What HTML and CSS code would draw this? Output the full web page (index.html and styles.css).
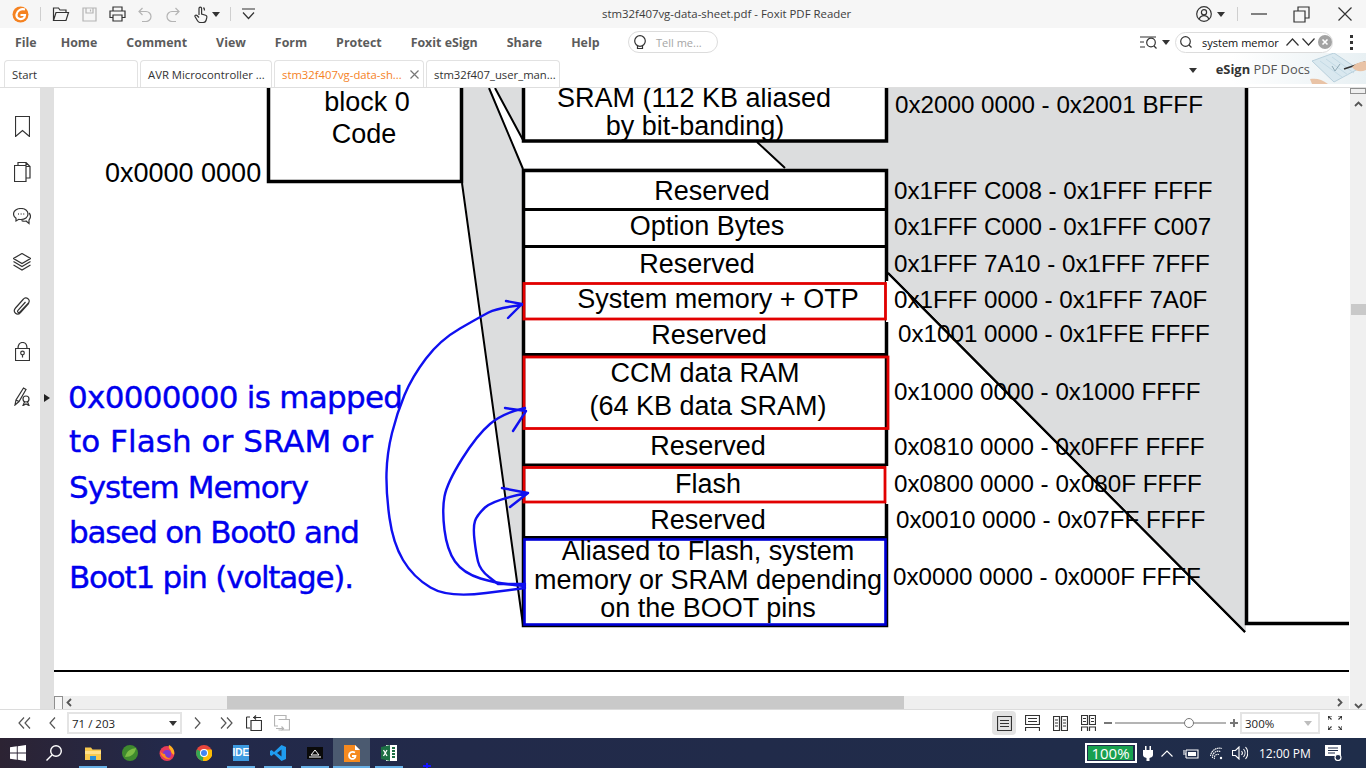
FILE: index.html
```html
<!DOCTYPE html>
<html lang="en">
<head>
<meta charset="utf-8">
<title>stm32f407vg-data-sheet.pdf - Foxit PDF Reader</title>
<link rel="stylesheet" href="styles.css">
</head>
<body>
<div class="app">
  <header class="titlebar">
    <div class="logo-cell">
      <svg width="17" height="17" viewBox="0 0 17 17"><circle cx="8.5" cy="8.5" r="8" fill="#f58220"/><path d="M13 3.5C9 2.5 5 4.5 4.5 8.5S8 14 11 12.5c1.500-.8 2-2.500 2-3.500H8.500" fill="none" stroke="#fff" stroke-width="2.200"/></svg>
    </div>
    <span class="vsep"></span>
    <div class="quick">
      <button class="tool"><svg width="18" height="16" viewBox="0 0 18 16" class="ic"><path d="M1.500 14.500V2h5l1.500 2h6v2.500M1.500 14.500h12.500l2.500-8H4z"/></svg></button>
      <button class="tool"><svg width="15" height="15" viewBox="0 0 15 15" class="ic dim"><path d="M1 1h13v13H1zM4 1v5h7V1M8.500 2.500v2"/></svg></button>
      <button class="tool"><svg width="17" height="16" viewBox="0 0 17 16" class="ic"><path d="M4 5V1h9v4M4 11.500H1V5h15v6.500h-3M4 9h9v6H4z"/></svg></button>
      <button class="tool"><svg width="14" height="15" viewBox="0 0 14 15" class="ic dim"><path d="M4.500 1L1 4.500 4.500 8M1 4.500h7a5 5 0 0 1 0 10H4"/></svg></button>
      <button class="tool"><svg width="14" height="15" viewBox="0 0 14 15" class="ic dim"><path d="M9.500 1L13 4.500 9.500 8M13 4.500H6a5 5 0 0 0 0 10h4"/></svg></button>
      <button class="tool"><svg width="14" height="17" viewBox="0 0 14 17" class="ic"><path d="M5 9V2.500a1.300 1.300 0 0 1 2.600 0V8l4 1.200c1 .3 1.400 1.200 1.200 2.200l-.6 2.600c-.3 1.300-1.400 2.500-3 2.500H6.500c-1.500 0-2.400-.8-3-1.800L1 10.500c-.4-1.200 1-2 2-1L5 11.500"/><path d="M9.500 1.500a4.500 4.500 0 0 1 1 3"/></svg></button>
      <span class="caret caret-hand"></span>
    </div>
    <span class="vsep sep-b"></span>
    <svg class="ic collapse" width="13" height="13" viewBox="0 0 13 13"><path d="M0 1h13M1 4.500l5.500 6 5.500-6"/></svg>
    <div class="doc-title">stm32f407vg-data-sheet.pdf - Foxit PDF Reader</div>
    <div class="win-controls">
      <svg class="ic" width="16" height="16" viewBox="0 0 16 16"><circle cx="8" cy="8" r="7.300"/><circle cx="8" cy="6.200" r="2.600"/><path d="M3.200 13c1-2.500 2.700-3.300 4.800-3.300s3.800.8 4.800 3.300"/></svg>
      <span class="caret caret-user"></span>
      <span class="vsep sep-w"></span>
      <svg class="ic w-min" width="16" height="2" viewBox="0 0 16 2"><path d="M0 1h16"/></svg>
      <svg class="ic w-max" width="17" height="17" viewBox="0 0 17 17"><path d="M1 5h11v11H1zM5 5V1h11v11h-4"/></svg>
      <svg class="ic w-close" width="14" height="14" viewBox="0 0 14 14"><path d="M.5.5l13 13M13.500.5l-13 13"/></svg>
    </div>
  </header>

  <nav class="menubar">
    <ul class="menu">
      <li>File</li><li>Home</li><li>Comment</li><li>View</li><li>Form</li><li>Protect</li><li>Foxit eSign</li><li>Share</li><li>Help</li>
    </ul>
    <div class="tell">
      <svg class="ic" width="12" height="15" viewBox="0 0 12 15"><circle cx="6" cy="6" r="5.300"/><path d="M3.500 11v2.500h5V11"/></svg>
      <span>Tell me...</span>
    </div>
    <div class="find-tools">
      <svg class="ic" width="17" height="13" viewBox="0 0 17 13"><path d="M0 1h16M0 6h4M0 11h5"/><circle cx="11" cy="6.500" r="4.300"/><path d="M14 10l2.500 2.500"/></svg>
      <span class="caret"></span>
    </div>
    <div class="search">
      <svg class="ic" width="12" height="12" viewBox="0 0 12 12"><circle cx="5.500" cy="5.500" r="4.800"/><path d="M9 9l2.500 2.500"/></svg>
      <span class="search-text">system memor</span>
      <svg class="ic chev" width="13" height="8" viewBox="0 0 13 8"><path d="M.5 7.500l6-6.500 6 6.500"/></svg>
      <svg class="ic chev" width="13" height="8" viewBox="0 0 13 8"><path d="M.5.5l6 6.500 6-6.500"/></svg>
      <svg class="clear" width="14" height="14" viewBox="0 0 14 14"><circle cx="7" cy="7" r="7" fill="#a3a3a3"/><path d="M4.500 4.500l5 5M9.500 4.500l-5 5" stroke="#fff" stroke-width="1.600"/></svg>
    </div>
    <div class="kebab"><i></i><i></i><i></i></div>
  </nav>

  <div class="tabbar">
    <div class="tab tab-start">Start</div>
    <div class="tab tab-avr">AVR Microcontroller ...</div>
    <div class="tab tab-active"><span>stm32f407vg-data-sh...</span><svg class="ic" width="9" height="9" viewBox="0 0 9 9"><path d="M.5.5l8 8M8.500.5l-8 8"/></svg></div>
    <div class="tab tab-user">stm32f407_user_man...</div>
    <span class="caret caret-tabs"></span>
    <div class="banner">
      <span class="banner-text"><b>eSign</b> PDF Docs</span>
      <svg width="56" height="31" viewBox="0 0 56 31"><path d="M2 8L24 0 48 16 24 29z" fill="#d9e8ef" stroke="#b9d0dc"/><path d="M10 8l22 16M16 6l22 16M22 4l22 16" stroke="#c4dae5"/><path d="M22 13l3 5 5-7" fill="none" stroke="#8fa9b5"/><path d="M34 16l21-7" stroke="#333" stroke-width="1.500"/><path d="M42 14c4-4 8-5 14-6v9c-5 2-10 2-14-3z" fill="#e9c3a6"/><path d="M0 26c6-1 12 0 18 5H2z" fill="#e9c3a6"/></svg>
    </div>
  </div>

  <main class="main">
    <aside class="rail">
      <div class="rail-item"><svg class="ic" width="15" height="21" viewBox="0 0 15 21"><path d="M.5.500h14v20l-7-6-7 6z"/></svg></div>
      <div class="rail-item"><svg class="ic" width="17" height="20" viewBox="0 0 17 20"><path d="M4 3V.5h8l4 4V16h-4M12 .5v4h4M.5 3.500H12V19.500H.5z"/></svg></div>
      <div class="rail-item"><svg class="ic" width="18" height="18" viewBox="0 0 18 18"><path d="M8 .5c4 0 7 2.300 7 5.500s-3 5.500-7 5.500c-.8 0-1.500 0-2.200-.2L3 13v-2.800C1.500 9.300.5 7.800.5 6 .5 2.800 4 .5 8 .5z"/><path d="M16 5c1 1 1.500 2.200 1.500 3.500S16.700 11 16 12v3.500l-3-2.500c-1.500.5-3 .3-4.500-.5"/><path d="M5 6h.8M7.700 6h.8M10.400 6h.8" stroke-width="1.500"/></svg></div>
      <div class="rail-item"><svg class="ic" width="18" height="18" viewBox="0 0 18 18"><path d="M9 .5l8.500 5-8.500 5-8.500-5zM.5 8.500l8.500 5 8.500-5M.5 12l8.500 5 8.500-5"/></svg></div>
      <div class="rail-item"><svg class="ic" width="18" height="19" viewBox="0 0 18 19"><path d="M16 6L7.500 15.500c-1.500 1.700-3.500 2-5 .7S1 12.800 2.500 11l8-9c1-1.300 3-1.500 4.500-.3s1.600 3 .5 4.300L7 15c-.6.700-1.500.8-2 .3s-.5-1.400 0-2L12.500 5"/></svg></div>
      <div class="rail-item"><svg class="ic" width="15" height="19" viewBox="0 0 15 19"><path d="M.5 6.500h14v12H.5zM3 6.500C3 3 4.500.5 7.500.5S12 3 12 6.500"/><circle cx="7.500" cy="11" r="1.800"/><path d="M7.500 12.800v2.700"/></svg></div>
      <div class="rail-item"><svg class="ic" width="17" height="19" viewBox="0 0 17 19"><path d="M1 18l1-5L9.500 1 12 2.500 5 14.500zM2 13l3 1.500"/><circle cx="12" cy="12" r="3"/><path d="M10.500 15L9 18.500l3-1.500 3 1.500-1.500-3.500"/></svg></div>
    </aside>
    <div class="gutter"><span class="gutter-arrow"></span></div>
    <div class="viewer">
      <div class="view-row">
        <svg class="pdf" width="1295" height="607" viewBox="54 88 1295 607">
          <rect x="54" y="88" width="1295" height="607" fill="#fff"/>
          <polygon class="g" points="463,88 1246,88 1246,632 888,273 888,626 523,626 463,183"/>
          <polygon class="w" points="490,88 495,88 523,140 757,142 785,168 523,168"/>
          <path class="thin" d="M462 183L523 625M489 88L523 169M495 88L523 140M757 142L785 168M888 273L1245 632"/>
          <path class="thick-frame" d="M1246.500 88V623.500H1349"/>
          <rect class="box" x="268.500" y="78" width="193" height="103.500"/>
          <rect class="box" x="523.500" y="78" width="363" height="63"/>
          <rect class="box" x="523.500" y="170.500" width="363" height="455"/>
          <path class="div" d="M523 209.500H888M523 246.500H888M523 354.500H888M523 465H888M523 537.500H888"/>
          <rect class="w" x="886" y="281" width="3" height="41"/>
          <rect class="w" x="886" y="466" width="3" height="38"/>
          <rect class="red" x="524" y="283.500" width="361.500" height="35.500"/>
          <rect class="red" x="524" y="357" width="364" height="71.500"/>
          <rect class="red" x="524" y="467.500" width="361" height="34.500"/>
          <rect class="blue" x="524.500" y="539.500" width="361" height="85"/>
          <path class="thin" d="M888 273L1245 632"/>
          <path class="rule" d="M54 671H1349"/>

          <text class="c" x="367" y="111">block 0</text>
          <text class="c" x="364" y="143">Code</text>
          <text x="105" y="182">0x0000 0000</text>
          <text class="c" x="694" y="107">SRAM (112 KB aliased</text>
          <text class="c" x="695" y="135">by bit-banding)</text>
          <text class="c" x="712" y="200">Reserved</text>
          <text class="c" x="707" y="235">Option Bytes</text>
          <text class="c" x="697" y="273">Reserved</text>
          <text class="c" x="718" y="308">System memory + OTP</text>
          <text class="c" x="709" y="344">Reserved</text>
          <text class="c" x="705" y="382">CCM data RAM</text>
          <text class="c" x="708" y="415">(64 KB data SRAM)</text>
          <text class="c" x="708" y="455">Reserved</text>
          <text class="c" x="708" y="493">Flash</text>
          <text class="c" x="708" y="529">Reserved</text>
          <text class="c" x="708" y="560">Aliased to Flash, system</text>
          <text class="c" x="708" y="589">memory or SRAM depending</text>
          <text class="c" x="708" y="617">on the BOOT pins</text>

          <text class="a" x="895" y="113">0x2000 0000 - 0x2001 BFFF</text>
          <text class="a" x="894" y="199">0x1FFF C008 - 0x1FFF FFFF</text>
          <text class="a" x="894" y="235">0x1FFF C000 - 0x1FFF C007</text>
          <text class="a" x="894" y="272">0x1FFF 7A10 - 0x1FFF 7FFF</text>
          <text class="a" x="894" y="308">0x1FFF 0000 - 0x1FFF 7A0F</text>
          <text class="a" x="898" y="342">0x1001 0000 - 0x1FFE FFFF</text>
          <text class="a" x="894" y="400">0x1000 0000 - 0x1000 FFFF</text>
          <text class="a" x="894" y="455">0x0810 0000 - 0x0FFF FFFF</text>
          <text class="a" x="894" y="492">0x0800 0000 - 0x080F FFFF</text>
          <text class="a" x="896" y="528">0x0010 0000 - 0x07FF FFFF</text>
          <text class="a" x="893" y="585">0x0000 0000 - 0x000F FFFF</text>

          <text class="note" x="68" y="408" textLength="335">0x0000000 is mapped</text>
          <text class="note" x="69" y="452" textLength="304">to Flash or SRAM or</text>
          <text class="note" x="69" y="498" textLength="240">System Memory</text>
          <text class="note" x="69" y="543" textLength="291">based on Boot0 and</text>
          <text class="note" x="69" y="588" textLength="285">Boot1 pin (voltage).</text>

          <path class="arrow" d="M525 588L486 593Q448 598 430.500 587.500Q413 577 403 560Q393 543 389.500 518Q386 493 386.500 473Q387 453 392 433Q397 413 404.500 395Q412 377 426 358.500Q440 340 460 328.500Q480 317 488.500 312.500Q497 308 522 305M506 301L522 304L508 318"/>
          <path class="arrow" d="M525 586Q498 584 480.500 578.500Q463 573 455 561.500Q447 550 444.500 530Q442 510 444.500 496.500Q447 483 462 459Q477 435 490 424Q503 413 525 408M505 408L526 411L513 431"/>
          <path class="arrow" d="M525 584L498 584L489 577Q480 570 478 561.500Q476 553 474.500 540Q473 527 475 521Q477 515 485 507.500Q493 500 527 493M502 488L528 493L510 507"/>
        </svg>
        <div class="vscroll">
          <span class="vtab"></span>
          <svg class="sbchev up" width="9" height="6" viewBox="0 0 9 6"><path d="M1 5l3.500-3.500L8 5"/></svg>
          <span class="vthumb"></span>
          <svg class="sbchev down" width="9" height="6" viewBox="0 0 9 6"><path d="M1 1l3.500 3.500L8 1"/></svg>
        </div>
      </div>
      <div class="hscroll">
        <span class="htab"></span>
        <svg class="sbchev hleft" width="6" height="9" viewBox="0 0 6 9"><path d="M5 1L1.500 4.500 5 8"/></svg>
        <span class="hthumb"></span>
        <svg class="sbchev hright" width="6" height="9" viewBox="0 0 6 9"><path d="M1 1l3.500 3.500L1 8"/></svg>
      </div>
    </div>
  </main>

  <footer class="statusbar">
    <svg class="ic nav first" width="13" height="12" viewBox="0 0 13 12"><path d="M6 .5L1 6l5 5.500M12 .5L7 6l5 5.500"/></svg>
    <svg class="ic nav prev" width="7" height="12" viewBox="0 0 7 12"><path d="M6 .5L1 6l5 5.500"/></svg>
    <div class="page-box"><span>71 / 203</span><span class="caret"></span></div>
    <svg class="ic nav next" width="7" height="12" viewBox="0 0 7 12"><path d="M1 .5L6 6l-5 5.500"/></svg>
    <svg class="ic nav last" width="13" height="12" viewBox="0 0 13 12"><path d="M1 .5L6 6l-5 5.500M7 .5l5 5.500-5 5.500"/></svg>
    <svg class="ic nav hist" width="16" height="16" viewBox="0 0 16 16"><path d="M.5 2h3.500v0M.5 2v11H4M5 5.500h10.500v10H5zM7 2.500h8M10 .5L8 2.500l2 2"/></svg>
    <svg class="ic dim nav hist2" width="16" height="16" viewBox="0 0 16 16"><path d="M12 4V.5H.5V11H4M4.500 4.500H15.500V15H4.500M2 13.500h7M7.500 11.500l2 2-2 2"/></svg>

    <div class="status-right">
      <span class="view-btn active"><svg class="ic" width="15" height="15" viewBox="0 0 15 15"><path d="M.5.500h14v14H.5zM3 4.500h9M3 7.500h9M3 10.500h9"/></svg></span>
      <span class="view-btn"><svg class="ic" width="15" height="16" viewBox="0 0 15 16"><path d="M.5.500h14v9H.5zM3 3.500h9M3 6.500h9M.5 16v-3.500h14V16"/></svg></span>
      <span class="view-btn"><svg class="ic" width="15" height="15" viewBox="0 0 15 15"><path d="M.5.500h6v14h-6zM8.500.500h6v14h-6zM2 4h3M2 7h3M2 10h3M10 4h3M10 7h3M10 10h3"/></svg></span>
      <span class="view-btn"><svg class="ic" width="15" height="16" viewBox="0 0 15 16"><path d="M.5.500h6v9h-6zM8.500.500h6v9h-6zM2 3.500h3M2 6.500h3M10 3.500h3M10 6.500h3M.5 16v-4h6v4M8.500 16v-4h6v4"/></svg></span>
      <span class="minus"></span>
      <span class="slider"><span class="knob"></span></span>
      <span class="plus"></span>
      <div class="zoom-box"><span>300%</span><span class="caret pale"></span></div>
      <svg class="ic full" width="14" height="14" viewBox="0 0 14 14"><path d="M0 4V0h4M0 0l3.500 3.500M10 0h4v4M14 0l-3.500 3.500M0 10v4h4M0 14l3.500-3.500M14 10v4h-4M14 14l-3.500-3.500"/></svg>
    </div>
  </footer>

  <div class="taskbar">
    <div class="sys sys-win"><svg width="16" height="16" viewBox="0 0 16 16"><path d="M0 2.300L6.800 1.300V7.500H0zM7.700 1.200L16 0V7.500H7.700zM0 8.400H6.800V14.700L0 13.700zM7.700 8.400H16V16L7.700 14.800z" fill="#fff"/></svg></div>
    <div class="sys"><svg width="16" height="16" viewBox="0 0 16 16" fill="none" stroke="#fff" stroke-width="1.400"><circle cx="10" cy="6" r="5.300"/><path d="M6 10l-5.500 5.500"/></svg></div>
    <div class="task task-gap run"><svg width="16" height="14" viewBox="0 0 16 14"><path d="M0 1.500h6l1.500 2H16V14H0z" fill="#f8c94e"/><path d="M0 5h16v3H0z" fill="#ffe08a"/><path d="M5 14V10h6v4z" fill="#2a8fd8"/></svg></div>
    <div class="task"><svg width="16" height="16" viewBox="0 0 16 16"><circle cx="8" cy="8" r="8" fill="#3f8a2e"/><path d="M3 12C5 5 9 4 14 3 13 9 9 12 3 12z" fill="#7cbc45"/></svg></div>
    <div class="task"><svg width="16" height="16" viewBox="0 0 16 16"><circle cx="8" cy="8.500" r="7.500" fill="#e63b5a"/><path d="M10 0c4 2 6 6 5 10-2-1-3-3-3-4-1-2-3-3-2-6z" fill="#ffb01f"/><circle cx="8" cy="9" r="4" fill="#7a3bd0"/><path d="M1 6c1 6 6 9 11 8-4-1-6-3-6-5-2 0-4-1-5-3z" fill="#ff8a1e"/></svg></div>
    <div class="task"><svg width="16" height="16" viewBox="0 0 16 16"><circle cx="8" cy="8" r="8" fill="#e8453c"/><path d="M8 8L1 4.500A8 8 0 0 0 7 16z" fill="#34a853"/><path d="M8 4.500h7.500A8 8 0 0 1 7 16z" fill="#fbbc05"/><circle cx="8" cy="8" r="4" fill="#fff"/><circle cx="8" cy="8" r="3" fill="#4285f4"/></svg></div>
    <div class="task run"><span class="ide">IDE</span></div>
    <div class="task run"><svg width="16" height="16" viewBox="0 0 16 16"><path d="M11.500 0L16 2v12l-4.500 2L4 9l-2.500 2L0 10V6l1.500-1L4 7z" fill="#1f9cf0"/><path d="M11.500 4.500L7 8l4.500 3.500z" fill="#1f2d4a"/></svg></div>
    <div class="task run"><svg width="16" height="12" viewBox="0 0 16 12"><path d="M0 0h16v12H0z" fill="#0a0a0a"/><path d="M4 8l4-5 4 5zM2 10h12" stroke="#fff" fill="none"/></svg></div>
    <div class="task run on"><svg width="16" height="17" viewBox="0 0 16 17"><path d="M0 0h11l5 5v12H0z" fill="#f58a1f"/><path d="M11 0v5h5z" fill="#fff"/><path d="M11 7.500C8 6 5 7.500 5 10.500s3 4 5 3c1-.5 1.500-1.500 1.500-2.500H8" fill="none" stroke="#fff" stroke-width="1.800"/></svg></div>
    <div class="task run"><svg width="16" height="16" viewBox="0 0 16 16"><path d="M5 0h11v16H5z" fill="#fff"/><path d="M11 2h3v2h-3zM11 5h3v2h-3zM11 8h3v2h-3zM11 11h3v2h-3z" fill="#1d7044"/><path d="M0 2l9-2v16l-9-2z" fill="#1d7044"/><path d="M2.500 5l3.500 6M6 5l-3.500 6" stroke="#fff" stroke-width="1.300"/></svg></div>
    <span class="stray"></span>
    <div class="tray">
      <div class="battery"><span class="battery-fill">100%</span></div>
      <svg class="tray-plug" width="10" height="15" viewBox="0 0 10 15" fill="#fff"><path d="M2 0h1.500v4H2zM6.500 0H8v4H6.500zM0 4h10v5c0 1.500-1.500 2.500-3.500 3V15h-3v-3C1.500 11.500 0 10.500 0 9z"/></svg>
      <svg class="tray-ic chevup" width="12" height="7" viewBox="0 0 12 7"><path d="M.5 6.500L6 1l5.500 5.500"/></svg>
      <svg class="tray-ic batt" width="16" height="11" viewBox="0 0 16 11"><path d="M3 2h12v8H3M0 6h3M1 2v3M3 2v8"/><path d="M5 4h8v4H5z" fill="#fff" stroke="none"/></svg>
      <svg class="tray-ic wifi" width="14" height="13" viewBox="0 0 14 13"><path d="M.5 9A9 9 0 0 1 12 1.500M2.500 11a6 6 0 0 1 8-6.500M4.500 12A3.500 3.500 0 0 1 9 7.500" stroke-dasharray="1.500 .6"/><circle cx="11" cy="11" r="1.200" fill="#fff" stroke="none"/></svg>
      <svg class="tray-ic vol" width="16" height="14" viewBox="0 0 16 14"><path d="M.5 4.500h3L7 1v12L3.500 9.500h-3zM9.500 5a3 3 0 0 1 0 4M11.500 3a6 6 0 0 1 0 8M13.500 1a9 9 0 0 1 0 12"/></svg>
      <span class="clock">12:00 PM</span>
      <svg class="tray-ic notif" width="17" height="16" viewBox="0 0 17 16"><path d="M0 0h16v11h-4l-2 3v-3H0z" fill="#fff" stroke="none"/><path d="M3 3h10M3 5.500h10M3 8h7" stroke="#1f2d4a"/><circle cx="13" cy="12.500" r="3" fill="#1f2d4a"/></svg>
    </div>
  </div>
</div>
</body>
</html>
```

FILE: styles.css
```css
* { box-sizing: border-box; }
html, body { margin: 0; padding: 0; height: 100%; overflow: hidden; background: #fff; }
body { font-family: "Open Sans", "Noto Sans", sans-serif; color: #333; }
ul { list-style: none; margin: 0; padding: 0; }
button { border: 0; background: none; padding: 0; }
.app { width: 1366px; height: 768px; display: flex; flex-direction: column; }

.ic { fill: none; stroke: #333; stroke-width: 1.2; flex: none; display: block; }
.ic.dim { stroke: #b4b4b4; }
.caret { width: 0; height: 0; border-left: 4.500px solid transparent; border-right: 4.500px solid transparent; border-top: 5px solid #333; flex: none; display: block; }
.caret.pale { border-top-color: #bdbdbd; }

/* title bar */
.titlebar { height: 28px; background: #f6f6f6; display: flex; align-items: center; position: relative; flex: none; }
.logo-cell { width: 40px; padding-left: 12px; }
.logo-cell svg { display: block; }
.vsep { width: 1px; height: 14px; background: #cfcfcf; flex: none; }
.quick { display: flex; align-items: center; margin-left: 6px; }
.tool { width: 28px; height: 28px; display: flex; align-items: center; justify-content: center; }
.caret-hand { margin-left: -3px; }
.sep-b { margin-left: 10px; }
.collapse { margin-left: 11px; }
.doc-title { position: absolute; left: 602px; top: 5px; font-size: 11.400px; line-height: 18px; color: #3c3c3c; white-space: nowrap; }
.win-controls { margin-left: auto; display: flex; align-items: center; padding-right: 14px; }
.caret-user { margin-left: 5px; }
.sep-w { margin-left: 12px; }
.w-min { margin-left: 13px; }
.w-max { margin-left: 26px; }
.w-close { margin-left: 28px; }

/* menu bar */
.menubar { height: 32px; background: #fff; display: flex; align-items: center; flex: none; padding: 0 0 4px 15px; }
.menu { display: flex; gap: 29px; font-size: 12.400px; font-weight: 700; color: #5c5c5c; width: 584px; flex: none; }
.menu li { white-space: nowrap; flex: none; }
.menu li:first-child { margin-right: -5px; }
.tell { margin-left: 29px; width: 90px; height: 22px; border: 1px solid #dcdcdc; border-radius: 11px; display: flex; align-items: center; padding-left: 5px; gap: 10px; font-size: 11px; color: #a5a5a5; }
.find-tools { margin-left: auto; display: flex; align-items: center; gap: 5px; }
.search { margin-left: 5px; width: 158px; height: 21px; border: 1px solid #dcdcdc; border-radius: 11px; display: flex; align-items: center; padding-left: 4px; }
.search-text { font-size: 11px; color: #111; margin-left: 10px; width: 84px; white-space: nowrap; }
.chev { margin-right: 3px; }
.clear { flex: none; }
.kebab { margin-left: 17px; margin-right: 13px; display: flex; flex-direction: column; gap: 3px; }
.kebab i { width: 3px; height: 3px; background: #333; display: block; }

/* tabs */
.tabbar { height: 28px; background: #fff; border-bottom: 1px solid #dedede; display: flex; align-items: stretch; padding-left: 4px; gap: 2px; flex: none; }
.tab { border: 1px solid #e2e2e2; border-bottom: 0; border-radius: 4px 4px 0 0; font-size: 11.300px; color: #333; display: flex; align-items: center; padding-left: 7px; white-space: nowrap; }
.tab-start { width: 134px; }
.tab-avr { width: 132px; }
.tab-active { width: 150px; color: #f5821f; gap: 8px; }
.tab-active svg { stroke: #777; }
.tab-user { width: 134px; }
.caret-tabs { margin-left: auto; align-self: center; margin-top: -6px; }
.banner { width: 167px; height: 31px; margin-top: -7px; display: flex; align-items: center; justify-content: flex-end; background: linear-gradient(90deg, #fff 20%, #e8f0f3 100%); }
.banner-text { font-size: 12.900px; color: #555; white-space: nowrap; }
.banner-text b { color: #333; }
.banner svg { display: block; flex: none; }

/* main */
.main { height: 621px; display: flex; flex: none; }
.rail { width: 40px; background: #fff; padding-top: 16px; flex: none; }
.rail-item { height: 45px; display: flex; align-items: center; justify-content: center; padding-left: 4px; }
.gutter { width: 14px; background: #e0e0e0; padding-top: 306px; flex: none; }
.gutter-arrow { display: block; margin-left: 4px; width: 0; height: 0; border-top: 4.500px solid transparent; border-bottom: 4.500px solid transparent; border-left: 6px solid #222; }
.viewer { flex: 1; display: flex; flex-direction: column; position: relative; }
.view-row { display: flex; height: 607px; }
.pdf { display: block; flex: none; }
.pdf text { font-family: "Liberation Sans", Arial, sans-serif; font-size: 27px; fill: #000; }
.pdf text.a { font-size: 24.200px; }
.pdf text.c { text-anchor: middle; }
.pdf text.note { font-family: "DejaVu Sans", sans-serif; font-size: 31px; fill: #0000ee; stroke: #0000ee; stroke-width: .4px; }
.g { fill: #dcddde; }
.w { fill: #fff; }
.thin { fill: none; stroke: #000; stroke-width: 2; }
.thick-frame { fill: none; stroke: #000; stroke-width: 3.500; }
.box { fill: #fff; stroke: #000; stroke-width: 3.500; }
.div { fill: none; stroke: #000; stroke-width: 3; }
.red { fill: none; stroke: #e20000; stroke-width: 2.800; }
.blue { fill: #fff; stroke: #0000d8; stroke-width: 2.600; }
.rule { stroke: #000; stroke-width: 2; }
.arrow { fill: none; stroke: #1010f0; stroke-width: 2.400; stroke-linejoin: round; stroke-linecap: round; }

.vscroll { width: 17px; padding-left: 1px; background: #f0f0f0; position: relative; display: flex; flex-direction: column; align-items: flex-start; height: 621px; border-left: 1px solid #fff; }
.vtab { display: block; width: 16px; height: 8px; margin-left: -1px; background: #efefef; border: 1px solid #8f8f8f; }
.sbchev { fill: none; stroke: #555; stroke-width: 1.800; display: block; flex: none; }
.sbchev.up { margin: 7px 0 0 3px; }
.vthumb { display: block; width: 15px; height: 17px; margin-top: 197px; background: #c9c9c9; }
.sbchev.down { margin: 388px 0 0 3px; }
.hscroll { height: 13px; background: #efefef; display: flex; align-items: center; width: 1295px; margin-top: 1px; }
.htab { width: 9px; height: 13px; background: #f8f8f8; border: 1px solid #8f8f8f; border-bottom: 0; display: block; flex: none; }
.sbchev.hleft { margin-left: 3px; }
.hthumb { width: 677px; height: 13px; margin-left: 155px; background: #c9c9c9; display: block; flex: none; }
.sbchev.hright { margin-left: 433px; }

/* status bar */
.statusbar { height: 29px; background: #fff; border-top: 1px solid #dcdcdc; display: flex; align-items: center; flex: none; padding: 0 0 2px 18px; }
.nav { stroke: #555; }
.prev { margin-left: 18px; }
.page-box { margin-left: 11px; width: 115px; height: 22px; border: 2px solid #e4e4e4; display: flex; align-items: center; justify-content: space-between; padding: 0 3px; font-size: 11.500px; color: #222; }
.next { margin-left: 12px; }
.last { margin-left: 19px; }
.hist { margin-left: 13px; stroke: #333; }
.hist2 { margin-left: 12px; stroke: #b4b4b4; }
.status-right { margin-left: auto; display: flex; align-items: center; padding-right: 24px; }
.view-btn { width: 24px; height: 24px; display: flex; align-items: center; justify-content: center; border-radius: 4px; margin-right: 4px; }
.view-btn.active { background: #e3e3e3; }
.minus { width: 8px; height: 2px; background: #777; display: block; }
.slider { width: 111px; height: 2px; background: #b4b4b4; margin-left: 3px; display: flex; align-items: center; }
.knob { display: block; width: 10px; height: 10px; border: 1px solid #777; background: #fff; border-radius: 50%; margin-left: 69px; flex: none; }
.plus { width: 8px; height: 8px; margin-left: 4px; background: linear-gradient(#777, #777) center / 8px 2px no-repeat, linear-gradient(#777, #777) center / 2px 8px no-repeat; display: block; }
.zoom-box { margin-left: 2px; width: 80px; height: 22px; border: 2px solid #e4e4e4; display: flex; align-items: center; justify-content: space-between; padding: 0 6px 0 3px; font-size: 11.500px; color: #222; }
.full { margin-left: 8px; }

/* taskbar */
.taskbar { height: 30px; background: linear-gradient(90deg, #2c2333 0, #23294a 12%, #1f2d4a 100%); display: flex; align-items: center; flex: none; position: relative; }
.sys { width: 36px; height: 30px; display: flex; align-items: center; justify-content: center; }
.task { width: 37px; height: 30px; display: flex; align-items: center; justify-content: center; flex: none; position: relative; }
.task-gap { margin-left: 2px; }
.run::after { content: ""; position: absolute; left: 4.500px; right: 4.500px; bottom: 0; height: 2px; background: #67b0e6; }
.on { background: #4b5a70; }
.on::after { left: 0; right: 0; }
.ide { width: 16px; height: 16px; background: #3d9ae0; color: #fff; font: 700 10px/16px "Liberation Sans", sans-serif; text-align: center; display: block; }
.stray { position: absolute; left: 423px; top: 25px; width: 8px; height: 5px; background: linear-gradient(#1414ff, #1414ff) center / 2px 5px no-repeat, linear-gradient(#1414ff, #1414ff) center / 8px 2px no-repeat; }
.tray { margin-left: auto; display: flex; align-items: center; padding-right: 24px; height: 30px; }
.battery { width: 52px; height: 20px; border: 2px solid #fff; background: #1f2d4a; display: flex; padding: 1px; }
.battery-fill { background: #17a04f; width: 45px; color: #fff; font: 400 15px/14px "Open Sans", sans-serif; text-align: center; display: block; }
.tray-plug { margin-left: 6px; flex: none; }
.tray-ic { fill: none; stroke: #fff; stroke-width: 1.100; flex: none; display: block; }
.chevup { margin-left: 8px; }
.batt { margin-left: 10px; }
.wifi { margin-left: 11px; }
.vol { margin-left: 8px; }
.clock { margin-left: 11px; font-size: 12px; color: #fff; white-space: nowrap; width: 50px; }
.notif { margin-left: 16px; }
```
